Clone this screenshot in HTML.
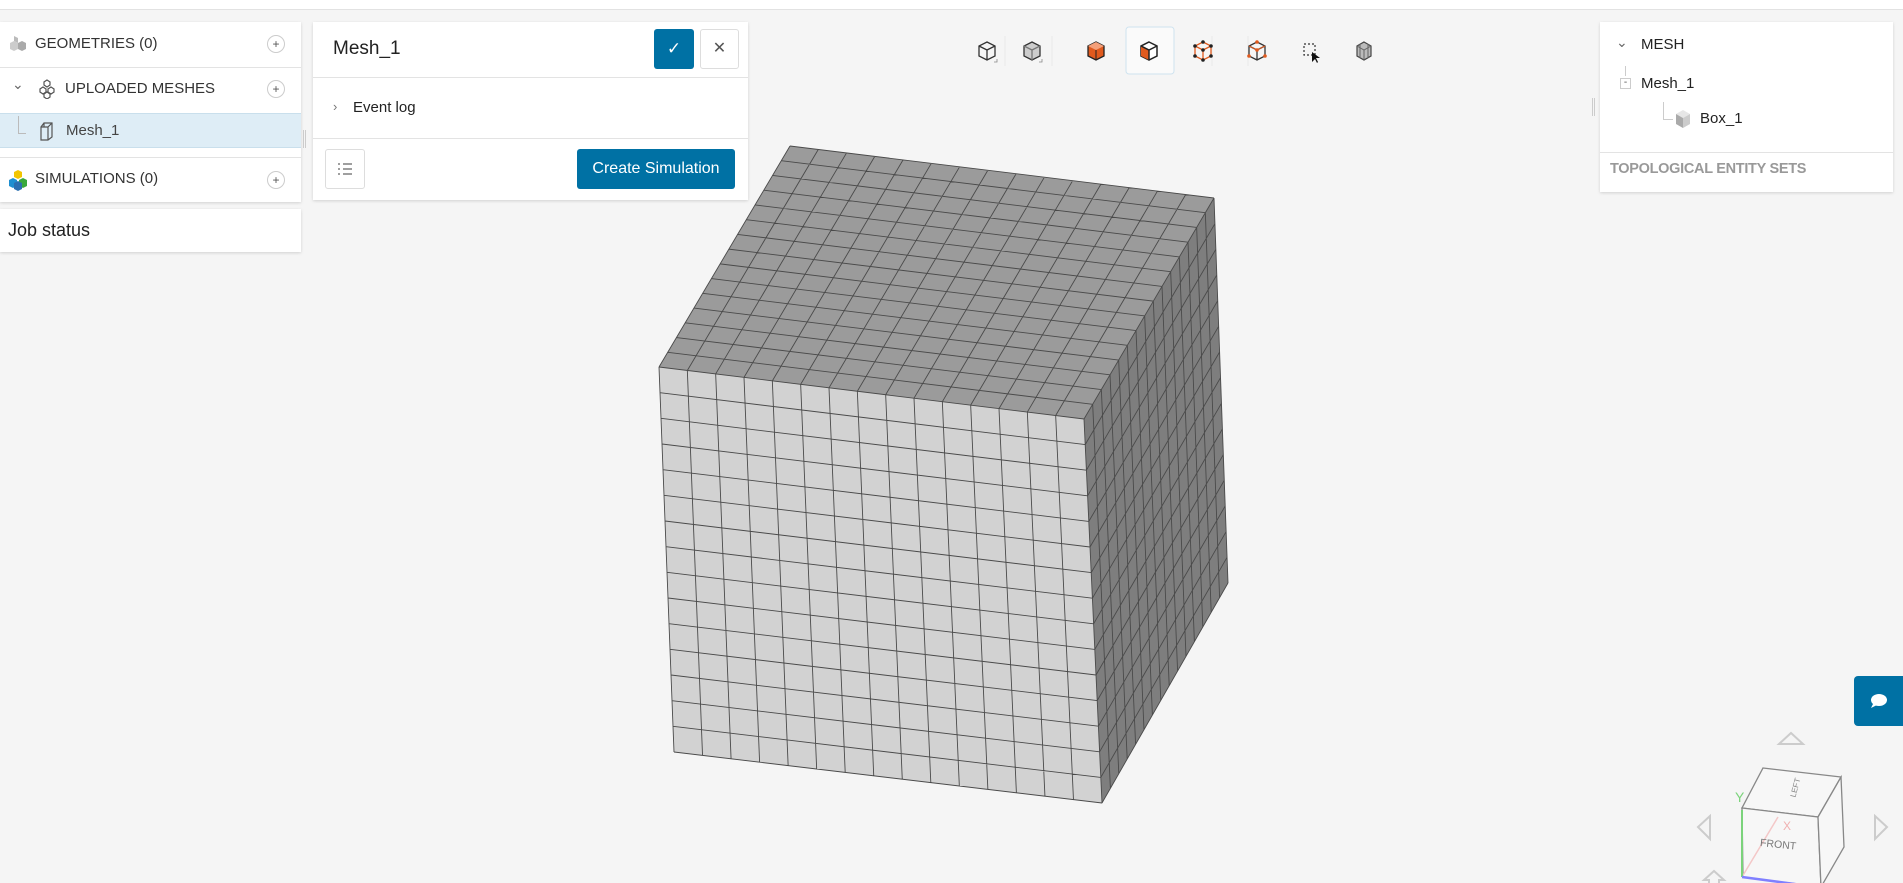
<!DOCTYPE html>
<html><head><meta charset="utf-8"><style>
*{box-sizing:border-box;margin:0;padding:0}
body{width:1903px;height:883px;background:#f5f5f5;font-family:"Liberation Sans",sans-serif;color:#333;position:relative;overflow:hidden}
.abs{position:absolute}
.panel{position:absolute;background:#fff;box-shadow:0 1px 3px rgba(0,0,0,.15)}
.t{position:absolute;white-space:nowrap}
.plus{position:absolute;width:18px;height:18px;border:1px solid #ccc;border-radius:50%;font-size:12px;line-height:16px;text-align:center;color:#555}
.hl{position:absolute;left:0;right:0;height:1px;background:#e3e3e3}
</style></head><body>
<div class="abs" style="left:0;top:0;width:1903px;height:10px;background:#fff;border-bottom:1px solid #e2e2e2"></div>

<!-- left panel -->
<div class="panel" style="left:0;top:22px;width:301px;height:180px">
  <svg class="abs" style="left:8px;top:12px" width="20" height="20" viewBox="0 0 20 20"><path d="M6 2l4 2v5l-4-2z" fill="#bbb"/><path d="M2 9l4-2 4 2v6l-4 2-4-2z" fill="#ccc"/><path d="M10 9l4-2 4 2v6l-4 2-4-2z" fill="#aaa"/></svg>
  <div class="t" style="left:35px;top:13px;font-size:15px">GEOMETRIES (0)</div>
  <div class="plus" style="left:267px;top:13px">+</div>
  <div class="hl" style="top:45px"></div>
  <div class="t" style="left:12px;top:54px;font-size:14px;color:#666">&#8964;</div>
  <svg class="abs" style="left:37px;top:57px" width="20" height="20" viewBox="0 0 20 20" fill="none" stroke="#555" stroke-width="1.2"><path d="M10 1l3 2v3l-3 2-3-2V3z M6 8l3 2v3l-3 2-3-2v-3z M14 8l3 2v3l-3 2-3-2v-3z M10 13l3 2v3l-3 2-3-2v-3z"/></svg>
  <div class="t" style="left:65px;top:58px;font-size:15px">UPLOADED MESHES</div>
  <div class="plus" style="left:267px;top:58px">+</div>
  <div class="abs" style="left:0;top:91px;width:301px;height:35px;background:#deedf6;border-top:1px solid #c9dfec;border-bottom:1px solid #c9dfec"></div>
  <div class="abs" style="left:18px;top:94px;width:8px;height:18px;border-left:1px solid #bbb;border-bottom:1px solid #bbb"></div>
  <svg class="abs" style="left:39px;top:99px" width="16" height="20" viewBox="0 0 16 20" fill="none" stroke="#555" stroke-width="1.2"><path d="M5 2h8v14l-4 3H2V6z M5 2v4H2 M13 2L9 6v13 M9 6H2"/></svg>
  <div class="t" style="left:66px;top:100px;font-size:15px;color:#444">Mesh_1</div>
  <div class="hl" style="top:135px"></div>
  <svg class="abs" style="left:8px;top:147px" width="20" height="22" viewBox="0 0 20 22"><path d="M10 1l4 2v5l-4 2-4-2V3z" fill="#f2c500"/><path d="M5 9l4 2v6l-4 2-4-2v-6z" fill="#1f8fd0"/><path d="M15 9l4 2v6l-4 2-4-2v-6z" fill="#39a83c"/><path d="M10 12l4 2v6l-4 2-4-2v-6z" fill="#2b6fb0"/></svg>
  <div class="t" style="left:35px;top:148px;font-size:15px">SIMULATIONS (0)</div>
  <div class="plus" style="left:267px;top:149px">+</div>
</div>
<div class="abs" style="left:303px;top:130px;width:3px;height:18px;border-left:1px solid #ccc;border-right:1px solid #ccc"></div>
<div class="panel" style="left:0;top:209px;width:301px;height:43px">
  <div class="t" style="left:8px;top:11px;font-size:18px;color:#222">Job status</div>
</div>

<!-- mesh panel -->
<div class="panel" style="left:313px;top:22px;width:435px;height:178px">
  <div class="t" style="left:20px;top:16px;font-size:19px;color:#222">Mesh_1</div>
  <div class="abs" style="left:341px;top:7px;width:40px;height:40px;background:#0071a4;border-radius:3px;color:#fff;text-align:center;line-height:40px;font-size:17px">&#10003;</div>
  <div class="abs" style="left:387px;top:7px;width:39px;height:40px;border:1px solid #ddd;border-radius:3px;color:#555;text-align:center;line-height:38px;font-size:16px">&#10005;</div>
  <div class="hl" style="top:55px"></div>
  <div class="t" style="left:20px;top:77px;font-size:13px;color:#777">&#8250;</div>
  <div class="t" style="left:40px;top:77px;font-size:15px;color:#222">Event log</div>
  <div class="hl" style="top:116px"></div>
  <div class="abs" style="left:12px;top:127px;width:40px;height:40px;border:1px solid #ddd;border-radius:3px">
    <svg class="abs" style="left:11px;top:12px" width="16" height="14" viewBox="0 0 16 14" stroke="#666" stroke-width="1.2"><path d="M1 2h2M6 2h9M1 7h2M6 7h9M1 12h2M6 12h9"/></svg>
  </div>
  <div class="abs" style="left:264px;top:127px;width:158px;height:40px;background:#0071a4;border-radius:3px;color:#fff;text-align:center;line-height:40px;font-size:16px">Create Simulation</div>
</div>

<!-- toolbar -->
<svg class="abs" style="left:970px;top:26px" width="420" height="50">
  <rect x="156" y="1" width="48" height="47" rx="3" fill="#fafafa" stroke="#cfe3ef"/>
  <g stroke="#e6e6e6" stroke-width="0.8"><path d="M35 10v30M82 10v30M242 10v30M278 10v30"/></g>
  <g fill="none" stroke="#333" stroke-width="1.3">
    <path d="M17 16l8 4v10l-8 4-8-4V20z M9 20l8 4 8-4 M17 24v10"/>
    <path d="M62 16l8 4v10l-8 4-8-4V20z" fill="#ccc"/><path d="M54 20l8 4 8-4M62 24v10" stroke="#777"/>
  </g>
  <path d="M24 36h3v-3M69 36h3v-3" stroke="#888" fill="none" stroke-width="0.8"/>
  <path d="M126 16l8 4v10l-8 4-8-4V20z" fill="#e05a1e" stroke="#222" stroke-width="1.3"/><path d="M118 20l8 4 8-4l-8-4z" fill="#f4a07a"/><path d="M126 24v10" stroke="#222"/>
  <path d="M179 16l8 4v10l-8 4-8-4V20z" fill="#fff" stroke="#222" stroke-width="1.5"/><path d="M171 20l8 4v10l-8-4z" fill="#e05a1e"/><path d="M171 20l8 4 8-4M179 24v10" stroke="#222" fill="none" stroke-width="1.5"/>
  <path d="M233 16l8 4v10l-8 4-8-4V20z M225 20l8 4 8-4 M233 24v10" fill="none" stroke="#e05a1e" stroke-width="1.3"/>
  <g fill="#222"><circle cx="233" cy="16" r="1.8"/><circle cx="241" cy="20" r="1.8"/><circle cx="241" cy="30" r="1.8"/><circle cx="233" cy="34" r="1.8"/><circle cx="225" cy="30" r="1.8"/><circle cx="225" cy="20" r="1.8"/><circle cx="233" cy="24" r="1.8"/></g>
  <path d="M287 16l8 4v10l-8 4-8-4V20z M279 20l8 4 8-4 M287 24v10" fill="none" stroke="#333" stroke-width="1.3"/>
  <g fill="#e05a1e"><path d="M279 20l8 4 8-4" stroke="#e05a1e" fill="none"/><circle cx="287" cy="24" r="1.8"/><circle cx="287" cy="16" r="1.8"/><circle cx="279" cy="30" r="1.8"/><circle cx="295" cy="30" r="1.8"/></g>
  <rect x="334" y="18" width="11" height="11" fill="none" stroke="#333" stroke-dasharray="2 2" stroke-width="1.2"/>
  <path d="M342 26l0 10 3-3 2 4 1-1-2-4h4z" fill="#111"/>
  <path d="M394 16l7 4v10l-7 4-7-4V20z" fill="#bbb" stroke="#444" stroke-width="1.2"/><path d="M387 20l7 4 7-4M394 24v10M390 18v14M398 18v14" stroke="#666" fill="none"/>
</svg>

<!-- right panel -->
<div class="abs" style="left:1592px;top:98px;width:3px;height:18px;border-left:1px solid #ccc;border-right:1px solid #ccc"></div>
<div class="panel" style="left:1600px;top:22px;width:293px;height:170px">
  <div class="t" style="left:16px;top:12px;font-size:14px;color:#666">&#8964;</div>
  <div class="t" style="left:41px;top:14px;font-size:15px;color:#222">MESH</div>
  <div class="abs" style="left:25px;top:44px;width:1px;height:10px;background:#ccc"></div>
  <div class="abs" style="left:20px;top:56px;width:11px;height:11px;border:1px solid #ccc;font-size:10px;line-height:8px;text-align:center;color:#555">-</div>
  <div class="t" style="left:41px;top:53px;font-size:15px;color:#222">Mesh_1</div>
  <div class="abs" style="left:63px;top:80px;width:10px;height:18px;border-left:1px solid #ccc;border-bottom:1px solid #ccc"></div>
  <svg class="abs" style="left:75px;top:87px" width="16" height="20" viewBox="0 0 16 20"><path d="M8 1l7 4-7 4-7-4z" fill="#e6e6e6"/><path d="M1 5l7 4v10l-7-4z" fill="#aaa"/><path d="M15 5l-7 4v10l7-4z" fill="#ccc"/></svg>
  <div class="t" style="left:100px;top:88px;font-size:15px;color:#222">Box_1</div>
  <div class="hl" style="top:130px"></div>
  <div class="t" style="left:10px;top:139px;font-size:14.5px;font-weight:bold;color:#999;letter-spacing:-0.3px">TOPOLOGICAL ENTITY SETS</div>
</div>

<!-- cube -->
<svg class="abs" style="left:0;top:0" width="1903" height="883" id="cube">
  <polygon points="790,146 1214,198 1084,419 659,367" fill="#9b9b9b"/>
  <polygon points="659,367 1084,419 1102,803 674,752" fill="#d2d2d2"/>
  <polygon points="1084,419 1214,198 1228,583 1102,803" fill="#7e7e7e"/>
  <g id="grid" stroke="#4a4a4a" stroke-width="0.9" fill="none"></g>
</svg>
<script>
(function(){
var g=document.getElementById('grid'),N=15,s='';
function face(a,b,c,d){
 for(var i=0;i<=N;i++){var t=i/N;
  var p1=[a[0]+(b[0]-a[0])*t,a[1]+(b[1]-a[1])*t],p2=[d[0]+(c[0]-d[0])*t,d[1]+(c[1]-d[1])*t];
  s+='M'+p1[0]+' '+p1[1]+'L'+p2[0]+' '+p2[1];
  var q1=[a[0]+(d[0]-a[0])*t,a[1]+(d[1]-a[1])*t],q2=[b[0]+(c[0]-b[0])*t,b[1]+(c[1]-b[1])*t];
  s+='M'+q1[0]+' '+q1[1]+'L'+q2[0]+' '+q2[1];}
}
face([790,146],[1214,198],[1084,419],[659,367]);
face([659,367],[1084,419],[1102,803],[674,752]);
face([1084,419],[1214,198],[1228,583],[1102,803]);
var p=document.createElementNS('http://www.w3.org/2000/svg','path');p.setAttribute('d',s);g.appendChild(p);
})();
</script>

<!-- chat -->
<div class="abs" style="left:1854px;top:676px;width:49px;height:50px;background:#0071a4;border-radius:4px 0 0 4px">
  <svg class="abs" style="left:16px;top:17px" width="18" height="16" viewBox="0 0 18 16"><ellipse cx="9" cy="7" rx="8" ry="6" fill="#fff"/><path d="M3 11l-2 4 6-3z" fill="#fff"/></svg>
</div>

<!-- nav cube -->
<svg class="abs" style="left:1680px;top:720px" width="223" height="163">
  <g fill="none" stroke="#ccc" stroke-width="2">
    <path d="M99 24l12-11 12 11z"/><path d="M30 96l-12 11 12 12z"/><path d="M195 96l12 11-12 12z"/>
    <path d="M24 160l10-9 10 9h-5v5h-10v-5z"/>
  </g>
  <path d="M83 48l78 9-23 40-76-9z" fill="#f7f7f7" stroke="#888" stroke-width="1.3"/>
  <path d="M62 88l76 9 3 70-78-10z" fill="#f7f7f7" stroke="#888" stroke-width="1.3"/>
  <path d="M138 97l23-40 3 70-23 40z" fill="#f7f7f7" stroke="#888" stroke-width="1.3"/>
  <path d="M62 157l36-60" stroke="#f4c8c8" stroke-width="1.5"/>
  <path d="M62 157V90" stroke="#7bd37b" stroke-width="2"/>
  <path d="M62 157l60 8" stroke="#8080ff" stroke-width="2.5"/>
  <text x="55" y="82" font-size="14" fill="#7bd37b" font-family="Liberation Sans">Y</text>
  <text x="103" y="110" font-size="12" fill="#f0b0b0" font-family="Liberation Sans">X</text>
  <text x="80" y="128" font-size="10.5" fill="#777" font-family="Liberation Sans" transform="rotate(6 100 125)">FRONT</text>
  <text x="111" y="78" font-size="8" fill="#888" font-family="Liberation Sans" transform="rotate(-75 113 75)">LEFT</text>
</svg>
</body></html>
